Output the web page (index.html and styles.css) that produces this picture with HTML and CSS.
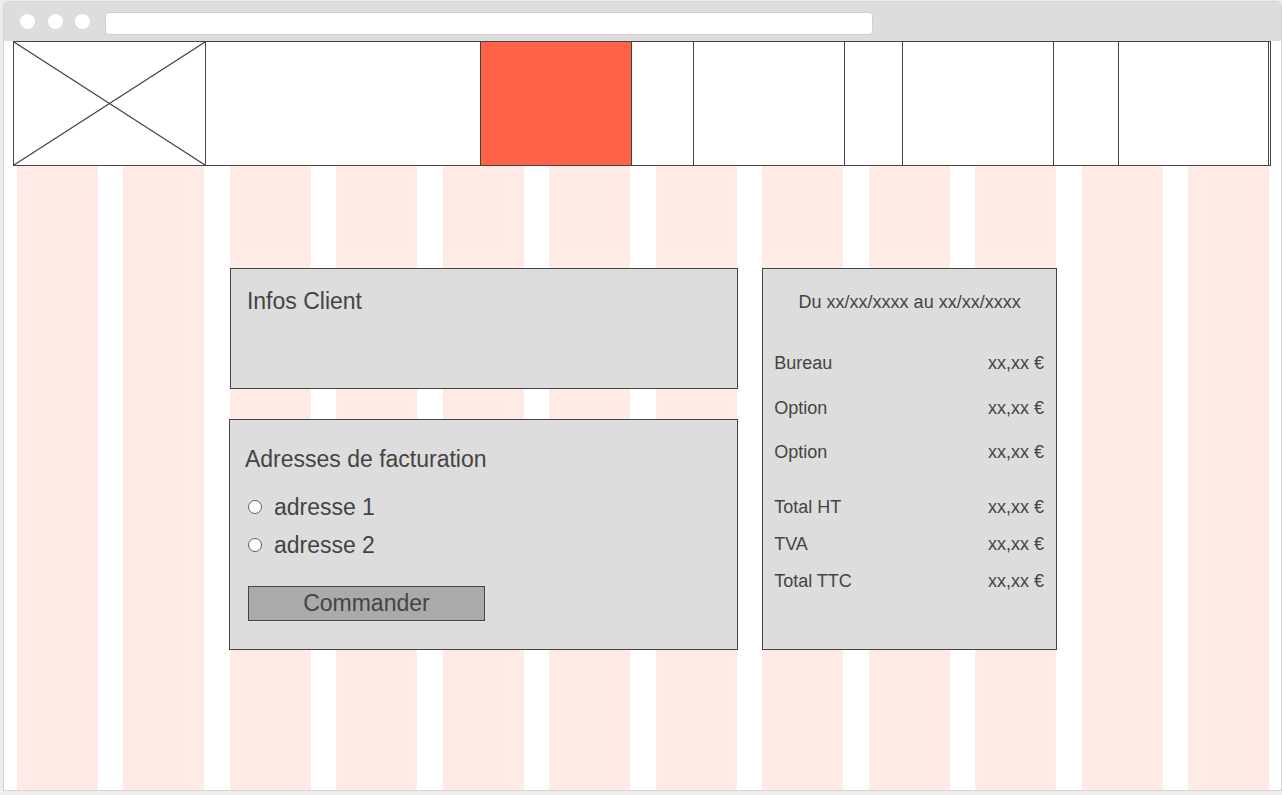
FILE: index.html
```html
<!DOCTYPE html>
<html lang="fr">
<head>
<meta charset="utf-8">
<title>Commande</title>
<link rel="stylesheet" href="styles.css">
</head>
<body>
<div class="window">
  <div class="titlebar">
    <span class="dot"></span>
    <span class="dot"></span>
    <span class="dot"></span>
    <div class="url"></div>
  </div>
  <div class="page">
    <div class="cols">
      <span></span><span></span><span></span><span></span><span></span><span></span>
      <span></span><span></span><span></span><span></span><span></span><span></span>
    </div>
    <header class="nav">
      <div class="cell logo">
        <svg class="logo-x" viewBox="0 0 191 123" preserveAspectRatio="none">
          <line x1="0" y1="0" x2="191" y2="123"/>
          <line x1="191" y1="0" x2="0" y2="123"/>
        </svg>
      </div>
      <div class="cell c-wide"></div>
      <div class="cell c-item active"></div>
      <div class="cell c-sp1"></div>
      <div class="cell c-item"></div>
      <div class="cell c-sp2"></div>
      <div class="cell c-item"></div>
      <div class="cell c-sp3"></div>
      <div class="cell c-last"></div>
    </header>
    <main class="layout">
      <section class="panel client">
        <h2 class="panel-title">Infos Client</h2>
      </section>
      <section class="panel billing">
        <h2 class="panel-title billing-title">Adresses de facturation</h2>
        <div class="billing-body">
          <label class="radio-row"><input type="radio" name="addr" class="radio"><span>adresse 1</span></label>
          <label class="radio-row second"><input type="radio" name="addr" class="radio"><span>adresse 2</span></label>
          <button class="order-btn" type="button">Commander</button>
        </div>
      </section>
      <aside class="panel summary">
        <div class="period">Du xx/xx/xxxx au xx/xx/xxxx</div>
        <div class="line r-bureau"><span>Bureau</span><span>xx,xx €</span></div>
        <div class="line r-opt1"><span>Option</span><span>xx,xx €</span></div>
        <div class="line r-opt2"><span>Option</span><span>xx,xx €</span></div>
        <div class="line r-ht"><span>Total HT</span><span>xx,xx €</span></div>
        <div class="line r-tva"><span>TVA</span><span>xx,xx €</span></div>
        <div class="line r-ttc"><span>Total TTC</span><span>xx,xx €</span></div>
      </aside>
    </main>
  </div>
</div>
</body>
</html>
```
FILE: styles.css
```css
* {
  box-sizing: border-box;
}

html, body {
  margin: 0;
  padding: 0;
}

body {
  background: #ededed;
  font-family: "Liberation Sans", Arial, sans-serif;
  color: #444;
  overflow: hidden;
}

.window {
  margin: 1px 0 0 3px;
  width: 1279px;
  height: 790px;
  border: 1px solid #d2d2d2;
  border-bottom-color: #d6d6d6;
  border-radius: 6px 6px 0 0;
  background: #fff;
  display: flex;
  flex-direction: column;
  overflow: hidden;
}

.titlebar {
  height: 39px;
  flex: none;
  background: #dddddd;
  display: flex;
  align-items: center;
  padding-left: 16px;
  gap: 12.5px;
}

.dot {
  width: 15px;
  height: 15px;
  border-radius: 50%;
  background: #fff;
  flex: none;
}

.url {
  margin-left: 2.5px;
  width: 768px;
  height: 23px;
  margin-top: 3px;
  background: #fff;
  border: 1px solid #d0d0d0;
  border-radius: 4px;
}

.page {
  position: relative;
  z-index: 0;
  flex: 1;
  background: #fff;
}

.cols {
  position: absolute;
  z-index: -1;
  top: 0;
  bottom: 0;
  left: 13px;
  width: 1252px;
  display: grid;
  grid-template-columns: repeat(12, 1fr);
  column-gap: 25.45px;
}

.cols span {
  background: #ffeae6;
}

.nav {
  margin-left: 9px;
  width: 1258px;
  height: 125px;
  border: 1px solid #444;
  background: #fff;
  display: flex;
}

.cell {
  flex: none;
  height: 100%;
  border-right: 1px solid #444;
}

.logo { width: 192px; }
.c-wide { width: 275px; }
.c-item { width: 151px; }
.c-sp1 { width: 62px; }
.c-sp2 { width: 58px; }
.c-sp3 { width: 65px; }
.c-last { width: 150px; }

.active {
  background: #ff6347;
}

.logo-x {
  display: block;
  width: 191px;
  height: 123px;
}

.logo-x line {
  stroke: #444;
  stroke-width: 1.2;
}

.layout {
  margin-left: 13px;
  width: 1252px;
  padding-top: 102px;
  display: grid;
  grid-template-columns: repeat(12, 1fr);
  column-gap: 25.45px;
  grid-template-rows: 121px 231px;
  row-gap: 30px;
}

.panel {
  background: #dddddd;
  border: 1px solid #444;
  margin-right: -1px;
}

.client {
  grid-column: 3 / 8;
  grid-row: 1;
  padding: 19px 15px 0 16px;
}

.billing {
  grid-column: 3 / 8;
  grid-row: 2;
  margin-left: -1px;
  padding: 26px 14px 0 15px;
}

.summary {
  grid-column: 8 / 11;
  grid-row: 1 / 3;
  padding: 23px 12px 0 11px;
}

.panel-title {
  margin: 0;
  font-size: 23px;
  line-height: 26px;
  font-weight: normal;
  color: #444;
}

.billing-body {
  padding-left: 3px;
  display: flex;
  flex-direction: column;
  align-items: flex-start;
}

.radio-row {
  display: flex;
  align-items: center;
  height: 26px;
  margin-top: 22px;
  font-size: 23px;
  line-height: 26px;
  gap: 12px;
}

.radio-row.second {
  margin-top: 12px;
}

.radio {
  appearance: none;
  -webkit-appearance: none;
  margin: 0;
  width: 14px;
  height: 14px;
  border: 1px solid #5c5c5c;
  border-radius: 50%;
  background: #fff;
  flex: none;
}

.order-btn {
  margin-top: 28px;
  width: 237px;
  height: 35px;
  padding: 0;
  background: #aaaaaa;
  border: 1px solid #444;
  border-radius: 0;
  font-family: "Liberation Sans", Arial, sans-serif;
  font-size: 23px;
  line-height: 33px;
  color: #444;
}

.period {
  text-align: center;
  font-size: 18px;
  line-height: 20px;
  padding-left: 1px;
}

.line {
  display: flex;
  justify-content: space-between;
  font-size: 18px;
  line-height: 20px;
}

.r-bureau { margin-top: 41px; }
.r-opt1 { margin-top: 25px; }
.r-opt2 { margin-top: 24px; }
.r-ht { margin-top: 35px; }
.r-tva { margin-top: 17px; }
.r-ttc { margin-top: 17px; }
```
